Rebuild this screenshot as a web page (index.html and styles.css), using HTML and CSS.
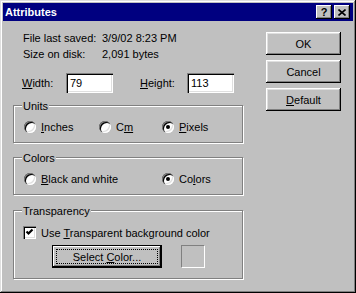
FILE: index.html
```html
<!DOCTYPE html>
<html lang="en">
<head>
  <meta charset="UTF-8" />
  <title>Attributes</title>
  <link rel="stylesheet" href="styles.css">
</head>
<body>

<div class="window">
  <div class="titlebar">
    <span class="title">Attributes</span>
    <div class="title-btns">
      <span class="tbtn help">?</span>
      <span class="tbtn close">
        <svg width="8" height="7" viewBox="0 0 8 7"><path d="M0.5 0.5 L7.5 6.5 M7.5 0.5 L0.5 6.5" stroke="#000" stroke-width="1.6" fill="none"/></svg>
      </span>
    </div>
  </div>

  <div class="body">
    <div class="main">
      <div class="info">
        <div class="info-row"><span class="info-label">File last saved:</span><span>3/9/02 8:23 PM</span></div>
        <div class="info-row"><span class="info-label">Size on disk:</span><span>2,091 bytes</span></div>
      </div>

      <div class="size-row">
        <span class="size-label"><u>W</u>idth:</span>
        <div class="field">79</div>
        <span class="size-label height"><u>H</u>eight:</span>
        <div class="field">113</div>
      </div>

      <div class="group units">
        <div class="group-label">Units</div>
        <div class="options">
          <div class="option opt-inches"><span class="radio"></span><span><u>I</u>nches</span></div>
          <div class="option opt-cm"><span class="radio"></span><span>C<u>m</u></span></div>
          <div class="option"><span class="radio checked"></span><span><u>P</u>ixels</span></div>
        </div>
      </div>

      <div class="group colors">
        <div class="group-label">Colors</div>
        <div class="options">
          <div class="option opt-bw"><span class="radio"></span><span><u>B</u>lack and white</span></div>
          <div class="option"><span class="radio checked"></span><span>Co<u>l</u>ors</span></div>
        </div>
      </div>

      <div class="group transparency">
        <div class="group-label">Transparency</div>
        <div class="check-row">
          <span class="checkbox">
            <svg width="9" height="9" viewBox="0 0 9 9"><path d="M1.5 3.5 L3.5 5.5 L7.5 1.5" stroke="#000" stroke-width="2.2" fill="none"/></svg>
          </span>
          <span>Use <u>T</u>ransparent background color</span>
        </div>
        <div class="color-row">
          <div class="btn btn-default"><span>Select <u>C</u>olor...</span></div>
          <div class="swatch"></div>
        </div>
      </div>
    </div>

    <div class="side">
      <div class="btn"><span>OK</span></div>
      <div class="btn"><span>Cancel</span></div>
      <div class="btn"><span><u>D</u>efault</span></div>
    </div>
  </div>
</div>

</body>
</html>
```

FILE: styles.css
```css
* {
  box-sizing: border-box;
}

body {
  margin: 0;
  font-family: 'Liberation Sans', Arial, sans-serif;
  font-size: 11px;
  color: #000;
  background: #c0c0c0;
}

u {
  text-underline-offset: 1px;
}

.window {
  width: 356px;
  height: 293px;
  padding: 3px;
  background: #c0c0c0;
  box-shadow: inset -1px -1px 0 #000, inset 1px 1px 0 #dfdfdf,
              inset -2px -2px 0 #808080, inset 2px 2px 0 #fff;
}

/* title bar */
.titlebar {
  height: 18px;
  background: #000080;
  color: #fff;
  display: flex;
  align-items: center;
  justify-content: space-between;
  padding: 0 3px 0 2px;
}

.title {
  font-weight: bold;
  font-size: 11px;
}

.title-btns {
  display: flex;
  gap: 2px;
}

.tbtn {
  width: 16px;
  height: 14px;
  background: #c0c0c0;
  color: #000;
  display: flex;
  align-items: center;
  justify-content: center;
  font-weight: bold;
  font-size: 11px;
  box-shadow: inset -1px -1px 0 #000, inset 1px 1px 0 #fff,
              inset -2px -2px 0 #808080;
}

.tbtn svg {
  display: block;
}

/* body */
.body {
  display: flex;
  padding-left: 10px;
}

.main {
  width: 230px;
}

.side {
  margin-left: 23px;
  padding-top: 11px;
  display: flex;
  flex-direction: column;
  gap: 5px;
}

.btn {
  width: 75px;
  height: 23px;
  display: flex;
  align-items: center;
  justify-content: center;
  background: #c0c0c0;
  box-shadow: inset -1px -1px 0 #000, inset 1px 1px 0 #fff,
              inset -2px -2px 0 #808080, inset 2px 2px 0 #dfdfdf;
}

.btn-default {
  width: 110px;
  border: 1px solid #000;
  box-shadow: inset -1px -1px 0 #000, inset 1px 1px 0 #fff,
              inset -2px -2px 0 #808080;
  outline: 1px dotted #000;
  outline-offset: -5px;
}

.info {
  margin-top: 9px;
  padding-left: 10px;
}

.info-row {
  display: flex;
  height: 16px;
  line-height: 16px;
}

.info-label {
  width: 79px;
}

.size-row {
  display: flex;
  align-items: center;
  height: 20px;
  margin-top: 11px;
  padding-left: 9px;
}

.size-label {
  width: 44px;
}

.size-label.height {
  width: 47px;
  margin-left: 27px;
}

.field {
  width: 47px;
  height: 20px;
  line-height: 20px;
  padding-left: 4px;
  background: #fff;
  box-shadow: inset 1px 1px 0 #808080, inset 2px 2px 0 #000,
              inset -1px -1px 0 #fff, inset -2px -2px 0 #dfdfdf;
}

/* group boxes */
.group {
  border: 1px solid #808080;
  box-shadow: inset 1px 1px 0 #fff, 1px 1px 0 #fff;
  padding-left: 8px;
}

.units {
  margin-top: 12px;
  height: 38px;
}

.colors {
  margin-top: 14px;
  height: 38px;
}

.transparency {
  margin-top: 15px;
  height: 69px;
}

.group-label {
  width: fit-content;
  margin-top: -6px;
  padding: 0 1px;
  line-height: 13px;
  background: #c0c0c0;
}

.options {
  display: flex;
  margin: 8px 0 0 2px;
}

.option {
  display: flex;
  align-items: center;
  gap: 5px;
  height: 12px;
}

.opt-inches {
  width: 75px;
}

.opt-cm {
  width: 63px;
}

.opt-bw {
  width: 138px;
}

.radio {
  width: 12px;
  height: 12px;
  border-radius: 50%;
  background: #fff;
  display: flex;
  align-items: center;
  justify-content: center;
  box-shadow: inset 1px 1px 0 #808080, inset 2px 2px 0 #000,
              inset -1px -1px 0 #fff, inset -2px -2px 0 #dfdfdf;
}

.radio.checked::after {
  content: "";
  width: 4px;
  height: 4px;
  border-radius: 50%;
  background: #000;
}

.check-row {
  display: flex;
  align-items: center;
  gap: 5px;
  margin: 8px 0 0 1px;
  height: 13px;
}

.checkbox {
  width: 13px;
  height: 13px;
  background: #fff;
  display: flex;
  align-items: center;
  justify-content: center;
  box-shadow: inset 1px 1px 0 #808080, inset 2px 2px 0 #000,
              inset -1px -1px 0 #fff, inset -2px -2px 0 #dfdfdf;
}

.checkbox svg {
  display: block;
}

.color-row {
  display: flex;
  margin: 6px 0 0 30px;
}

.swatch {
  width: 24px;
  height: 23px;
  margin-left: 19px;
  border: 1px solid;
  border-color: #808080 #fff #fff #808080;
}
```
